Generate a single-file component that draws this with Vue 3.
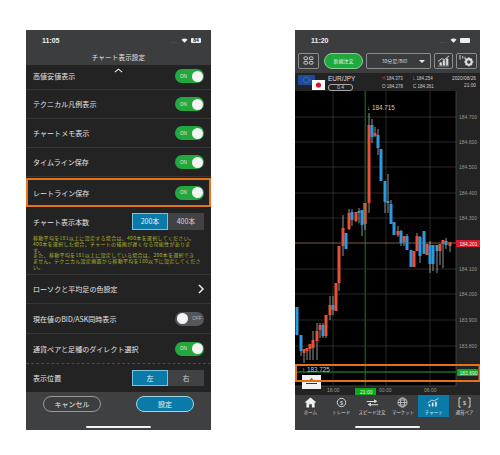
<script setup>
const rows = ['テクニカル凡例表示', 'チャートメモ表示', 'タイムライン保存']

// x, bodyTop, bodyBottom, wickTop, wickBottom, colour (r / b)
const candles = [
  [297, 304, 332, 304, 332, 'b'], [301, 332, 348, 332, 353, 'b'], [304, 346, 350, 346, 360, 'r'],
  [307, 345, 348, 345, 357, 'r'], [310, 341, 346, 341, 357, 'r'], [313, 337, 345, 328, 357, 'r'],
  [317, 328, 338, 320, 357, 'r'], [320, 322, 327, 320, 335, 'r'], [323, 322, 333, 320, 335, 'b'],
  [326, 312, 333, 312, 335, 'r'], [330, 302, 312, 293, 317, 'r'], [333, 302, 307, 293, 312, 'b'],
  [336, 280, 308, 280, 308, 'r'], [339, 243, 280, 243, 288, 'r'], [343, 225, 243, 212, 253, 'r'],
  [346, 230, 246, 230, 246, 'b'], [349, 210, 226, 206, 227, 'r'], [352, 209, 217, 206, 223, 'b'],
  [356, 209, 218, 209, 219, 'r'], [359, 208, 210, 205, 220, 'b'], [362, 207, 222, 207, 233, 'b'],
  [365, 200, 221, 200, 227, 'r'], [369, 122, 200, 110, 210, 'r'], [372, 122, 134, 116, 140, 'b'],
  [375, 130, 133, 124, 134, 'r'], [378, 132, 145, 126, 152, 'b'], [381, 146, 178, 146, 178, 'b'],
  [385, 178, 199, 178, 210, 'b'], [388, 198, 200, 171, 210, 'b'], [391, 201, 221, 197, 221, 'b'],
  [394, 219, 232, 219, 232, 'b'], [398, 228, 232, 223, 234, 'r'], [401, 228, 240, 227, 243, 'b'],
  [404, 233, 239, 233, 243, 'r'], [407, 233, 247, 231, 247, 'b'], [411, 247, 264, 247, 264, 'b'],
  [414, 248, 264, 248, 264, 'r'], [417, 233, 248, 230, 248, 'r'], [420, 234, 253, 233, 260, 'b'],
  [424, 228, 251, 228, 251, 'b'], [427, 241, 252, 241, 252, 'r'], [430, 242, 261, 238, 270, 'b'],
  [433, 242, 261, 242, 268, 'b'], [437, 242, 248, 242, 270, 'b'], [440, 241, 248, 241, 262, 'r'],
  [443, 237, 241, 237, 265, 'r'], [446, 238, 242, 235, 246, 'b'], [450, 239, 243, 239, 249, 'r'],
]
const bodies = { r: '#e8503a', b: '#2d9ae0' }

const axis = [
  [114, '184.700'], [139, '184.600'], [164, '184.500'], [190, '184.400'], [215, '184.300'],
  [266, '184.100'], [291, '184.000'], [317, '183.900'], [343, '183.800'],
]
const tabs = ['ホーム', 'トレード', 'スピード注文', 'マーケット', 'チャート', '通貨ペア']
</script>

<template>
  <div class="page">
    <section class="phone">
      <div class="status">
        <span class="time">11:05</span>
        <span class="status-right">
          <span class="dots">....</span>
          <svg class="wifi" viewBox="0 0 12 9"><path d="M6 8.600 0.600 3.200a7.600 7.600 0 0 1 10.800 0z" fill="#eee" /></svg>
          <span class="batt">84</span>
        </span>
      </div>
      <header class="title">チャート表示設定</header>

      <div class="settings">
        <svg class="scroll-up" viewBox="0 0 10 5"><path d="M1 4.400 5 1l4 3.400" fill="none" stroke="#eee" stroke-width="1.200" /></svg>
        <div class="row first">
          <span>高値安値表示</span>
          <span class="toggle on"><i>ON</i><b></b></span>
        </div>
        <div v-for="r in rows" :key="r" class="row">
          <span>{{ r }}</span>
          <span class="toggle on"><i>ON</i><b></b></span>
        </div>
        <div class="row marked">
          <span>レートライン保存</span>
          <span class="toggle on"><i>ON</i><b></b></span>
        </div>

        <div class="count">
          <div class="count-head">
            <span>チャート表示本数</span>
            <span class="seg"><em class="sel">200本</em><em>400本</em></span>
          </div>
          <p class="note">移動平均を181以上に設定する場合は、400本を選択してください。<br>400本を選択した場合、チャートの描画が遅くなる可能性がありま<br>す。<br>また、移動平均を181以上に設定している場合は、200本を選択でき<br>ません。テクニカル設定画面から移動平均を180以下に設定してくださ<br>い。</p>
        </div>

        <div class="row">
          <span>ローソクと平均足の色設定</span>
          <svg class="chev" viewBox="0 0 6 10"><path d="M1 1l4 4-4 4" fill="none" stroke="#eee" stroke-width="1.500" /></svg>
        </div>
        <div class="row tall">
          <span>現在値のBID/ASK同時表示</span>
          <span class="toggle off"><b></b><i>OFF</i></span>
        </div>
        <div class="row tall dashed">
          <span>通貨ペアと足種のダイレクト選択</span>
          <span class="toggle on"><i>ON</i><b></b></span>
        </div>
        <div class="row last">
          <span>表示位置</span>
          <span class="seg"><em class="sel">左</em><em>右</em></span>
        </div>
      </div>

      <footer class="actions">
        <div class="buttons">
          <button class="cancel">キャンセル</button>
          <button class="ok">設定</button>
        </div>
        <div class="home-bar"></div>
      </footer>
    </section>

    <section class="phone">
      <div class="status">
        <span class="time">11:20</span>
        <span class="status-right">
          <span class="dots">....</span>
          <svg class="wifi" viewBox="0 0 12 9"><path d="M6 8.600 0.600 3.200a7.600 7.600 0 0 1 10.800 0z" fill="#eee" /></svg>
          <span class="batt solid"></span>
        </span>
      </div>

      <div class="toolbar">
        <button class="tool grid-btn">
          <svg viewBox="0 0 12 10"><g fill="none" stroke="#ddd" stroke-width="1"><rect x="1" y="1" width="4" height="3" rx=".8" /><rect x="7" y="1" width="4" height="3" rx=".8" /><rect x="1" y="6" width="4" height="3" rx=".8" /><rect x="7" y="6" width="4" height="3" rx=".8" /></g></svg>
        </button>
        <button class="order">新規注文</button>
        <button class="select"><span>30分足/BID</span><i></i></button>
        <button class="tool chart-btn">
          <svg viewBox="0 0 14 13"><path d="M1 12h12M3 11V8h2v3zM6.500 11V6h2v5zM10 11V4h2v7z" fill="#ddd" stroke="#ddd" stroke-width=".5" /><path d="M1 7l4-3 3 1 5-4" fill="none" stroke="#ddd" /></svg>
        </button>
        <button class="tool gear-btn">
          <svg viewBox="0 0 16 14"><path d="M1 6V1M4 5V2M6.500 6V3" stroke="#ddd" fill="none" /><circle cx="10.500" cy="8.500" r="3" fill="none" stroke="#ddd" stroke-width="2.200" /><path d="M10.500 3.500v2M10.500 11.500v2M5.500 8.500h2M13.500 8.500h2M7 5l1.400 1.400M12.600 10.600 14 12M14 5l-1.400 1.400M8.400 10.600 7 12" stroke="#ddd" stroke-width="1.400" /></svg>
        </button>
      </div>

      <div class="info">
        <div class="flags">
          <svg class="eu" viewBox="0 0 17 10"><rect width="17" height="10" fill="#1c4a9c" /><circle cx="8.500" cy="5" r="3" fill="none" stroke="#c9b83a" stroke-width=".6" stroke-dasharray=".7 .9" /></svg>
          <svg class="jp" viewBox="0 0 13 10"><rect width="13" height="10" fill="#fff" /><circle cx="6.500" cy="5" r="2.600" fill="#d8142c" /></svg>
        </div>
        <div class="pair">
          <strong>EUR/JPY</strong>
          <span class="spread">0.4</span>
        </div>
        <div class="ohlc">
          <span><b class="red">H</b> 184.373</span><span><b class="blue">L</b> 184.254</span>
          <span>O 184.278</span><span>C 184.361</span>
        </div>
        <div class="date"><span>2020/08/26</span><span>21:00</span></div>
      </div>

      <svg class="chart" viewBox="295 88 185 304">
        <rect x="295" y="88" width="185" height="304" fill="#232323" />
        <rect x="295" y="88" width="161" height="295" fill="#000" />
        <path v-for="a in axis" :key="a[1]" :d="`M295 ${a[0]}H456`" stroke="#3a3a3a" stroke-width=".7" />
        <path d="M333 88V383M386 88V383M430 88V383" stroke="#3a3a3a" stroke-width=".7" />
        <path d="M456 88V383" stroke="#555" stroke-width=".7" />
        <path d="M295 383H456" stroke="#555" stroke-width=".7" />
        <rect x="364.500" y="88" width="1.600" height="295" fill="#12501a" />
        <path d="M295 240H456" stroke="#a5714f" stroke-width=".8" />
        <path d="M295 369H456" stroke="#1c6b22" stroke-width="1.400" />

        <g v-for="(c, i) in candles" :key="i">
          <path :d="`M${c[0]} ${c[3]}V${c[4]}`" stroke="#b9b9b9" stroke-width=".8" />
          <rect :x="c[0] - 1.500" :y="c[1]" width="3" :height="c[2] - c[1]" :fill="bodies[c[5]]" />
        </g>
        <rect x="363.500" y="200" width="3" height="21" fill="#b5673f" />

        <text x="367" y="107" class="mark">↓ 184.715</text>
        <text x="302" y="369" class="mark">↑ 183.725</text>

        <text v-for="a in axis" :key="a[1] + 't'" x="459" :y="a[0] + 2" class="ax">{{ a[1] }}</text>

        <rect x="456" y="237" width="24" height="7" fill="#d91a2c" />
        <text x="459.500" y="242.500" class="ax light">184.201</text>
        <rect x="457" y="366" width="21" height="7" rx="1" fill="#0fa91c" />
        <text x="459.500" y="371.500" class="ax light">183.690</text>

        <text x="327" y="388.500" class="ax">18:00</text>
        <rect x="355" y="385" width="21" height="7" fill="#0fa91c" />
        <text x="360" y="390.500" class="ax light">21:00</text>
        <text x="379" y="388.500" class="ax">00:00</text>
        <text x="424" y="388.500" class="ax">06:00</text>

        <rect x="302" y="372" width="19" height="14" fill="#f2f2f2" />
        <path d="M311.500 375l4 4h-8z" fill="#b4502a" />
        <path d="M306 380.500h11" stroke="#333" stroke-width="1" />

        <rect x="296" y="362" width="183.500" height="16" fill="none" stroke="#e4721a" stroke-width="2" />
      </svg>

      <nav class="tabs">
        <div v-for="(t, i) in tabs" :key="t" class="tab" :class="{ active: i === 4 }">
          <svg v-if="i === 0" viewBox="0 0 14 12"><path d="M7 .5 13.500 6H11.500v5.500H8.500V8h-3v3.500H2.500V6H.5z" fill="#eee" /></svg>
          <svg v-else-if="i === 1" viewBox="0 0 14 12"><circle cx="7" cy="6" r="4.600" fill="none" stroke="#ddd" /><text x="7" y="8.200" class="ico">$</text></svg>
          <svg v-else-if="i === 2" viewBox="0 0 16 12"><path d="M1 4h9V2l4 2.500-4 2.500V5.500H1zM15 8H6V6L2 8.500 6 11V9.500h9z" fill="#ddd" /></svg>
          <svg v-else-if="i === 3" viewBox="0 0 14 12"><g fill="none" stroke="#ddd" stroke-width=".8"><circle cx="7" cy="6" r="5" /><ellipse cx="7" cy="6" rx="2.300" ry="5" /><path d="M2 6h10M2.800 3.300h8.400M2.800 8.700h8.400" /></g></svg>
          <svg v-else-if="i === 4" viewBox="0 0 16 12"><path d="M2 11V8h2v3zM6 11V6h2v5zM10 11V5h2v6z" fill="#e8e8e8" /><path d="M1 6.500 6 3l3 1 5-3" fill="none" stroke="#e8e8e8" /></svg>
          <svg v-else viewBox="0 0 14 12"><path d="M3 1H1v10h2M11 1h2v10h-2" fill="none" stroke="#ddd" /><text x="7" y="8.500" class="ico">$</text></svg>
          <span>{{ t }}</span>
        </div>
      </nav>
      <div class="chart-foot"><div class="home-bar"></div></div>
    </section>
  </div>
</template>

<style scoped>
.page {
  display: flex;
  gap: 84px;
  width: 500px;
  height: 455px;
  padding: 30px 0 0 26px;
  box-sizing: border-box;
  background: #fff;
  font-family: "Noto Sans CJK JP", "Liberation Sans", sans-serif;
  overflow: hidden;
}
.phone {
  display: flex;
  flex-direction: column;
  width: 185px;
  height: 400px;
  background: #232323;
  color: #e4e4e4;
  overflow: hidden;
}
.status {
  flex: none;
  display: flex;
  justify-content: space-between;
  align-items: center;
  height: 21px;
  padding: 0 10px 0 16px;
  background: #3c3d3f;
  font-family: "Liberation Sans", sans-serif;
}
.time { font-size: 7px; font-weight: 700; color: #eee; }
.status-right { display: flex; align-items: center; gap: 3px; }
.dots { font-size: 5px; color: #888; letter-spacing: .5px; }
.wifi { width: 7px; height: 5px; }
.batt {
  width: 10px;
  height: 5px;
  border-radius: 1px;
  background: #eee;
  color: #222;
  font-size: 5px;
  line-height: 5px;
  text-align: center;
  font-weight: 700;
}
.title {
  flex: none;
  height: 14px;
  background: #3c3d3f;
  font-size: 6.500px;
  line-height: 12px;
  text-align: center;
  letter-spacing: .2px;
}
.settings {
  position: relative;
  flex: 1;
  min-height: 0;
  display: flex;
  flex-direction: column;
}
.scroll-up {
  position: absolute;
  left: 88px;
  top: 3px;
  width: 9px;
  height: 5px;
}
.row {
  flex: none;
  display: flex;
  justify-content: space-between;
  align-items: center;
  box-sizing: border-box;
  height: 29px;
  padding: 0 7px;
  border-bottom: 1px solid #363636;
  font-size: 7px;
  letter-spacing: .05px;
}
.row.first { height: 25px; padding-bottom: 2px; }
.row.tall { height: 30px; }
.row.dashed { border-bottom: 1px dashed #4a4a4a; }
.row.last { height: 28px; border-bottom: 0; }
.row.marked {
  position: relative;
  margin-top: 1px;
  outline: 2px solid #e4721a;
  outline-offset: -2px;
  border-bottom: 0;
}
.toggle {
  display: flex;
  align-items: center;
  justify-content: space-between;
  box-sizing: border-box;
  width: 29px;
  height: 14px;
  padding: 0 1.500px 0 5px;
  border-radius: 7px;
  font-size: 4.500px;
  font-family: "Liberation Sans", sans-serif;
}
.toggle i { font-style: normal; }
.toggle b { width: 11px; height: 11px; border-radius: 50%; background: #f4f4f4; }
.toggle.on { background: #22a83f; }
.toggle.off { background: #54565c; padding: 0 2.500px 0 1.500px; color: #b9b9b9; }
.count {
  flex: none;
  box-sizing: border-box;
  height: 68px;
  padding: 6px 7px 0;
  border-bottom: 1px solid #363636;
}
.count-head {
  display: flex;
  justify-content: space-between;
  align-items: center;
  font-size: 7px;
}
.seg { display: flex; }
.seg em {
  box-sizing: border-box;
  display: block;
  width: 36px;
  height: 16px;
  font-style: normal;
  font-size: 7px;
  line-height: 16px;
  text-align: center;
  background: #414244;
  color: #d6d6d6;
}
.count-head .seg em { height: 17px; line-height: 17px; }
.seg em.sel {
  width: 36px;
  background: #0a7ba8;
  border: 1px solid #7cc4dc;
  line-height: 14px;
  color: #e6f2f6;
}
.count-head .seg em.sel { line-height: 15px; }
.note {
  margin: 5px 0 0;
  font-size: 5px;
  line-height: 5.800px;
  letter-spacing: .3px;
  color: #b3b32c;
  white-space: nowrap;
}
.chev { width: 6px; height: 10px; }
.actions {
  flex: none;
  height: 38px;
  background: #3f4042;
  display: flex;
  flex-direction: column;
  align-items: center;
}
.buttons {
  display: flex;
  justify-content: center;
  gap: 35px;
  padding-top: 4px;
}
.buttons button {
  width: 58px;
  height: 16px;
  padding: 0;
  border-radius: 8px;
  font-family: inherit;
  font-size: 7px;
  line-height: 14px;
  color: #eee;
}
.cancel { background: #3c3d3f; border: 1px solid #9a9a9a; }
.ok { background: #0a7ba8; border: 1px solid #a4d6e8; }
.home-bar {
  width: 65px;
  height: 2px;
  margin-top: 14px;
  background: #f2f2f2;
  border-radius: 1px;
}
.toolbar {
  flex: none;
  display: flex;
  align-items: center;
  gap: 3px;
  height: 19px;
  padding: 0 3px 3px;
  background: #3c3d3f;
}
.toolbar button {
  flex: none;
  height: 16px;
  padding: 0;
  box-sizing: border-box;
  display: flex;
  align-items: center;
  justify-content: center;
}
.tool { border: 1px solid #8d8d8d; border-radius: 2px; background: #38393b; }
.grid-btn { width: 21px; }
.grid-btn svg { width: 11px; height: 9px; }
.order {
  width: 39px;
  margin-left: 2px;
  border: 1px solid #88d48f;
  border-radius: 8px;
  background: #20a83e;
  color: #e8f6ea;
  font-family: inherit;
  font-size: 5px;
}
.select {
  width: 65px;
  position: relative;
  border: 1px solid #8d8d8d;
  border-radius: 2px;
  background: #3a3b3d;
  color: #d8d8d8;
  font-family: inherit;
  font-size: 5px;
}
.select span { margin-right: 8px; }
.select i {
  position: absolute;
  right: 5px;
  top: 6px;
  border: 3px solid transparent;
  border-top-color: #eee;
  border-bottom: 0;
}
.chart-btn { width: 19px; }
.chart-btn svg { width: 13px; height: 12px; }
.gear-btn { width: 21px; }
.gear-btn svg { width: 15px; height: 13px; }
.info {
  flex: none;
  display: flex;
  height: 18px;
  box-sizing: border-box;
  padding: 2px 4px 0 3px;
  background: #232323;
  font-family: "Liberation Sans", sans-serif;
}
.flags { position: relative; width: 30px; flex: none; }
.eu { position: absolute; left: 0; top: 0; width: 17px; height: 10px; }
.jp { position: absolute; left: 14px; top: 5px; width: 13px; height: 10px; }
.pair {
  width: 54px;
  flex: none;
  display: flex;
  flex-direction: column;
  align-items: flex-start;
}
.pair strong { font-weight: 400; font-size: 6.500px; line-height: 8px; color: #ddd; }
.spread {
  width: 23px;
  height: 5px;
  margin-top: 1px;
  border: 1px solid #aaa;
  border-radius: 3px;
  font-size: 5px;
  line-height: 5px;
  text-align: center;
  color: #ccc;
}
.ohlc {
  width: 62px;
  flex: none;
  display: grid;
  grid-template-columns: 31px 31px;
  font-size: 4.500px;
  line-height: 7px;
  color: #ccc;
}
.ohlc b { font-weight: 400; }
.red { color: #d8323a; }
.blue { color: #3192d8; }
.date {
  flex: 1;
  min-width: 0;
  display: flex;
  flex-direction: column;
  align-items: flex-end;
  font-size: 4.800px;
  line-height: 7px;
  color: #ccc;
  white-space: nowrap;
}
.chart { flex: none; display: block; width: 185px; height: 304px; }
.mark { font: 6.300px "Liberation Sans", sans-serif; fill: #ccc; }
.ax { font: 5px "Liberation Sans", sans-serif; fill: #999; }
.ax.light { fill: #f0f0f0; }
.ico { font: 6px "Liberation Sans", sans-serif; fill: #ddd; text-anchor: middle; }
.tabs {
  flex: none;
  display: flex;
  height: 22px;
  background: #3c3d3f;
}
.tab {
  flex: 1;
  min-width: 0;
  display: flex;
  flex-direction: column;
  align-items: center;
  justify-content: center;
  gap: 1px;
  font-size: 4.500px;
  line-height: 6px;
  color: #d8d8d8;
  white-space: nowrap;
}
.tab svg { width: 13px; height: 11px; }
.tab.active { background: #0a7ba8; color: #e8f3f7; }
.chart-foot {
  flex: 1;
  background: #3c3d3f;
  display: flex;
  justify-content: center;
}
.chart-foot .home-bar { margin-top: 9px; }
</style>
